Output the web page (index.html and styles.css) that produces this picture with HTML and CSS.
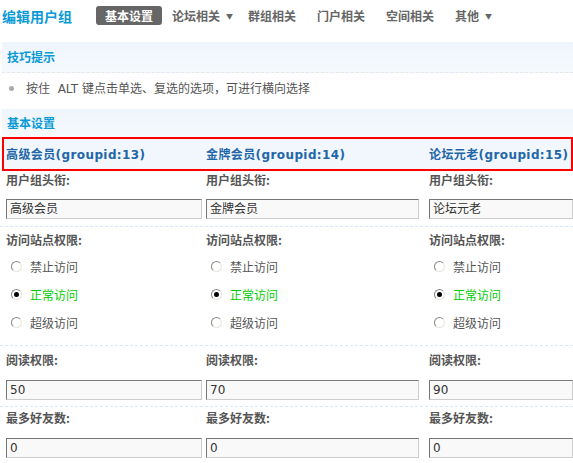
FILE: index.html
```html
<!DOCTYPE html>
<html>
<head>
<meta charset="utf-8">
<link rel="stylesheet" href="styles.css">
</head>
<body>
<div class="page">
  <div class="topbar">
    <h1 class="title">编辑用户组</h1>
    <ul class="nav">
      <li class="nav-item active">基本设置</li>
      <li class="nav-item has-caret">论坛相关<span class="caret">▼</span></li>
      <li class="nav-item">群组相关</li>
      <li class="nav-item">门户相关</li>
      <li class="nav-item">空间相关</li>
      <li class="nav-item has-caret">其他<span class="caret">▼</span></li>
    </ul>
  </div>

  <div class="band band-tip">技巧提示</div>
  <div class="tip-line"><span class="dot"></span>按住&nbsp; ALT 键点击单选、复选的选项，可进行横向选择</div>

  <div class="band">基本设置</div>

  <div class="groups">
    <div class="gname">高级会员(groupid:13)</div>
    <div class="gname">金牌会员(groupid:14)</div>
    <div class="gname">论坛元老(groupid:15)</div>
  </div>

  <div class="row row-title">
    <div class="cell c1"><div class="label">用户组头衔:</div><div class="input w1">高级会员</div></div>
    <div class="cell c2"><div class="label">用户组头衔:</div><div class="input w2">金牌会员</div></div>
    <div class="cell c3"><div class="label">用户组头衔:</div><div class="input w3">论坛元老</div></div>
  </div>

  <div class="row row-visit">
    <div class="cell c1">
      <div class="label">访问站点权限:</div>
      <div class="radio"><span class="rb"></span>禁止访问</div>
      <div class="radio on"><span class="rb"></span>正常访问</div>
      <div class="radio"><span class="rb"></span>超级访问</div>
    </div>
    <div class="cell c2">
      <div class="label">访问站点权限:</div>
      <div class="radio"><span class="rb"></span>禁止访问</div>
      <div class="radio on"><span class="rb"></span>正常访问</div>
      <div class="radio"><span class="rb"></span>超级访问</div>
    </div>
    <div class="cell c3">
      <div class="label">访问站点权限:</div>
      <div class="radio"><span class="rb"></span>禁止访问</div>
      <div class="radio on"><span class="rb"></span>正常访问</div>
      <div class="radio"><span class="rb"></span>超级访问</div>
    </div>
  </div>

  <div class="row row-read">
    <div class="cell c1"><div class="label">阅读权限:</div><div class="input w1">50</div></div>
    <div class="cell c2"><div class="label">阅读权限:</div><div class="input w2">70</div></div>
    <div class="cell c3"><div class="label">阅读权限:</div><div class="input w3">90</div></div>
  </div>

  <div class="row row-friends">
    <div class="cell c1"><div class="label">最多好友数:</div><div class="input w1">0</div></div>
    <div class="cell c2"><div class="label">最多好友数:</div><div class="input w2">0</div></div>
    <div class="cell c3"><div class="label">最多好友数:</div><div class="input w3">0</div></div>
  </div>
</div>
</body>
</html>
```

FILE: styles.css
```css
* { box-sizing: border-box; }
html, body { margin: 0; padding: 0; background: #fff; }
body {
  font-family: "DejaVu Sans", "Noto Sans CJK SC", sans-serif;
  font-size: 12px;
  color: #555;
  overflow: hidden;
}
.page { width: 573px; }

.topbar {
  display: flex;
  align-items: center;
  height: 31px;
  padding-left: 2px;
}
.title {
  margin: 0;
  font-family: "Noto Sans CJK SC", sans-serif;
  font-size: 14px;
  font-weight: bold;
  color: #0a9ad6;
  line-height: 20px;
  width: 94px;
  flex-shrink: 0;
}
.nav {
  display: flex;
  list-style: none;
  margin: 0;
  padding: 0;
  align-items: center;
}
.nav-item {
  font-family: "Noto Sans CJK SC", sans-serif;
  font-weight: bold;
  font-size: 12px;
  color: #666;
  line-height: 19px;
  padding: 0 6px;
  margin-right: 9px;
  border-radius: 3px;
  white-space: nowrap;
  flex-shrink: 0;
}
.nav-item.has-caret { padding-right: 0; }
.nav-item.active {
  background: #666;
  color: #fff;
  padding: 0 9px;
  margin-right: 4px;
}
.caret {
  font-size: 7px;
  margin-left: 6px;
  vertical-align: 2px;
}

.band {
  height: 28px;
  margin: 0 0 0 2px;
  padding-left: 5px;
  line-height: 28px;
  background: linear-gradient(#eef5fc, #f6fafe);
  font-family: "Noto Sans CJK SC", sans-serif;
  font-weight: bold;
  color: #0a9ad6;
}
.band-tip {
  margin-top: 11px;
  height: 31px;
  line-height: 29px;
  border-bottom: 1px dashed #e4e8ec;
}
.tip-line {
  height: 36px;
  line-height: 32px;
  padding-left: 26px;
  color: #555;
  font-family: "DejaVu Sans", "Noto Sans CJK SC", sans-serif;
}
.dot {
  display: inline-block;
  width: 5px;
  height: 5px;
  border-radius: 50%;
  background: #aaa;
  margin-left: -17px;
  margin-right: 12px;
  vertical-align: 2px;
}

.groups {
  display: grid;
  grid-template-columns: 200px 223px 1fr;
  height: 34px;
  margin-left: 2px;
  border: 2px solid #f00;
  background: #f1f7fc;
  padding-left: 2px;
  padding-bottom: 2px;
  align-items: center;
}
.gname {
  font-family: "DejaVu Sans", "Noto Sans CJK SC", sans-serif;
  font-weight: bold;
  color: #2366a8;
  font-size: 12px;
  letter-spacing: 0.4px;
}

.row {
  display: grid;
  grid-template-columns: 200px 223px 1fr;
  padding-left: 6px;
  border-bottom: 1px dashed #d6e8f7;
}
.label {
  font-family: "Noto Sans CJK SC", sans-serif;
  font-weight: bold;
  color: #555;
  line-height: 18px;
}
.input {
  height: 20px;
  line-height: 18px;
  padding-left: 3px;
  background: #f9f9f9;
  border: 1px solid;
  border-color: #777 #ccc #ccc #777;
  color: #333;
  font-family: "DejaVu Sans", "Noto Sans CJK SC", sans-serif;
  font-size: 12px;
}
.w1 { width: 196px; }
.w2 { width: 213px; }
.w3 { width: 144px; }

.row-title { height: 56px; padding-top: 0; }
.row-title .label { margin-top: 0; margin-bottom: 10px; }

.row-visit { height: 119px; padding-top: 4px; }
.row-visit .label { margin-bottom: 3px; }

.row-read { height: 61px; padding-top: 5px; }
.row-read .label { margin-bottom: 11px; }

.row-friends { border-bottom: none; padding-top: 2px; }
.row-friends .label { margin-bottom: 11px; }

.radio {
  display: flex;
  align-items: center;
  height: 28px;
  padding-left: 5px;
  color: #555;
  font-family: "Noto Sans CJK SC", sans-serif;
}
.radio.on { color: #00cc00; }
.rb {
  position: relative;
  display: inline-block;
  width: 11px;
  height: 11px;
  border-radius: 50%;
  border: 1px solid;
  border-color: #888 #e6e6dc #e6e6dc #888;
  background: #fff;
  margin-right: 8px;
}
.radio.on .rb::after {
  content: "";
  position: absolute;
  left: 2px;
  top: 2px;
  width: 5px;
  height: 5px;
  border-radius: 50%;
  background: #000;
}
```
